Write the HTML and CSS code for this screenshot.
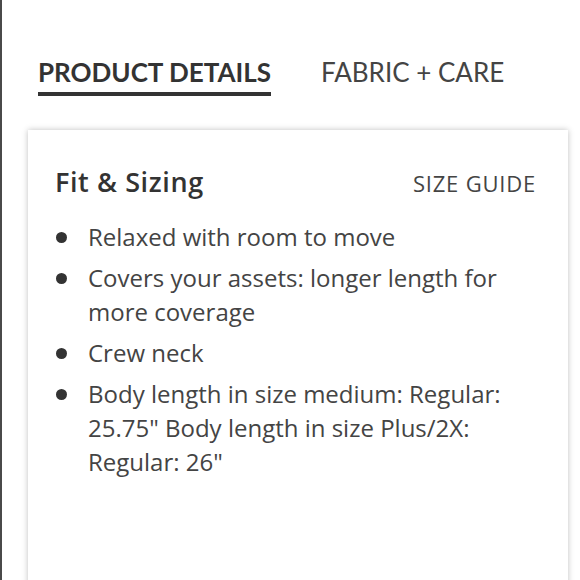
FILE: index.html
```html
<!DOCTYPE html>
<html>
<head>
<meta charset="utf-8">
<link rel="stylesheet" href="styles.css">
</head>
<body>
<div class="page">
  <nav class="tabs">
    <div class="tab active">PRODUCT DETAILS</div>
    <div class="tab">FABRIC + CARE</div>
  </nav>
  <section class="card">
    <header class="card-head">
      <h2 class="card-title">Fit &amp; Sizing</h2>
      <a class="size-guide">SIZE GUIDE</a>
    </header>
    <ul class="list">
      <li>Relaxed with room to move</li>
      <li>Covers your assets: longer length for more coverage</li>
      <li>Crew neck</li>
      <li>Body length in size medium: Regular: 25.75" Body length in size Plus/2X: Regular: 26"</li>
    </ul>
  </section>
</div>
</body>
</html>
```
FILE: styles.css
```css
html, body {
  margin: 0;
  padding: 0;
  background: #fff;
  overflow: hidden;
}
body {
  font-family: "Open Sans", "Lato", sans-serif;
  color: #444;
}
.page {
  border-left: 2px solid #4a4a4a;
  height: 580px;
  box-sizing: border-box;
  padding-top: 56px;
  overflow: hidden;
}
.tabs {
  display: flex;
  gap: 50px;
  padding-left: 36px;
  font-family: "Lato", sans-serif;
}
.tab {
  font-size: 26px;
  line-height: 32px;
  color: #444;
  padding-bottom: 4px;
  border-bottom: 4px solid transparent;
}
.tab.active {
  font-weight: 700;
  color: #333;
  border-bottom-color: #333;
}
.card {
  margin: 34px 10px 0 26px;
  width: 540px;
  height: 480px;
  box-sizing: border-box;
  background: #fff;
  box-shadow: 0 0 6px rgba(0,0,0,0.25);
  padding: 36px 32px 0 27px;
}
.card-head {
  display: flex;
  justify-content: space-between;
  align-items: baseline;
}
.card-title {
  margin: 0;
  font-size: 27px;
  font-weight: 600;
  line-height: 32px;
  letter-spacing: 0.6px;
  color: #333;
}
.size-guide {
  font-size: 22px;
  letter-spacing: 0.8px;
  color: #444;
}
.list {
  list-style: none;
  margin: 22px 0 0;
  padding: 0;
}
.list li {
  position: relative;
  padding-left: 33px;
  font-size: 24px;
  line-height: 34px;
  margin-bottom: 7px;
}
.list li::before {
  content: "";
  position: absolute;
  left: 1px;
  top: 12px;
  width: 11px;
  height: 11px;
  border-radius: 50%;
  background: #333;
}
```
